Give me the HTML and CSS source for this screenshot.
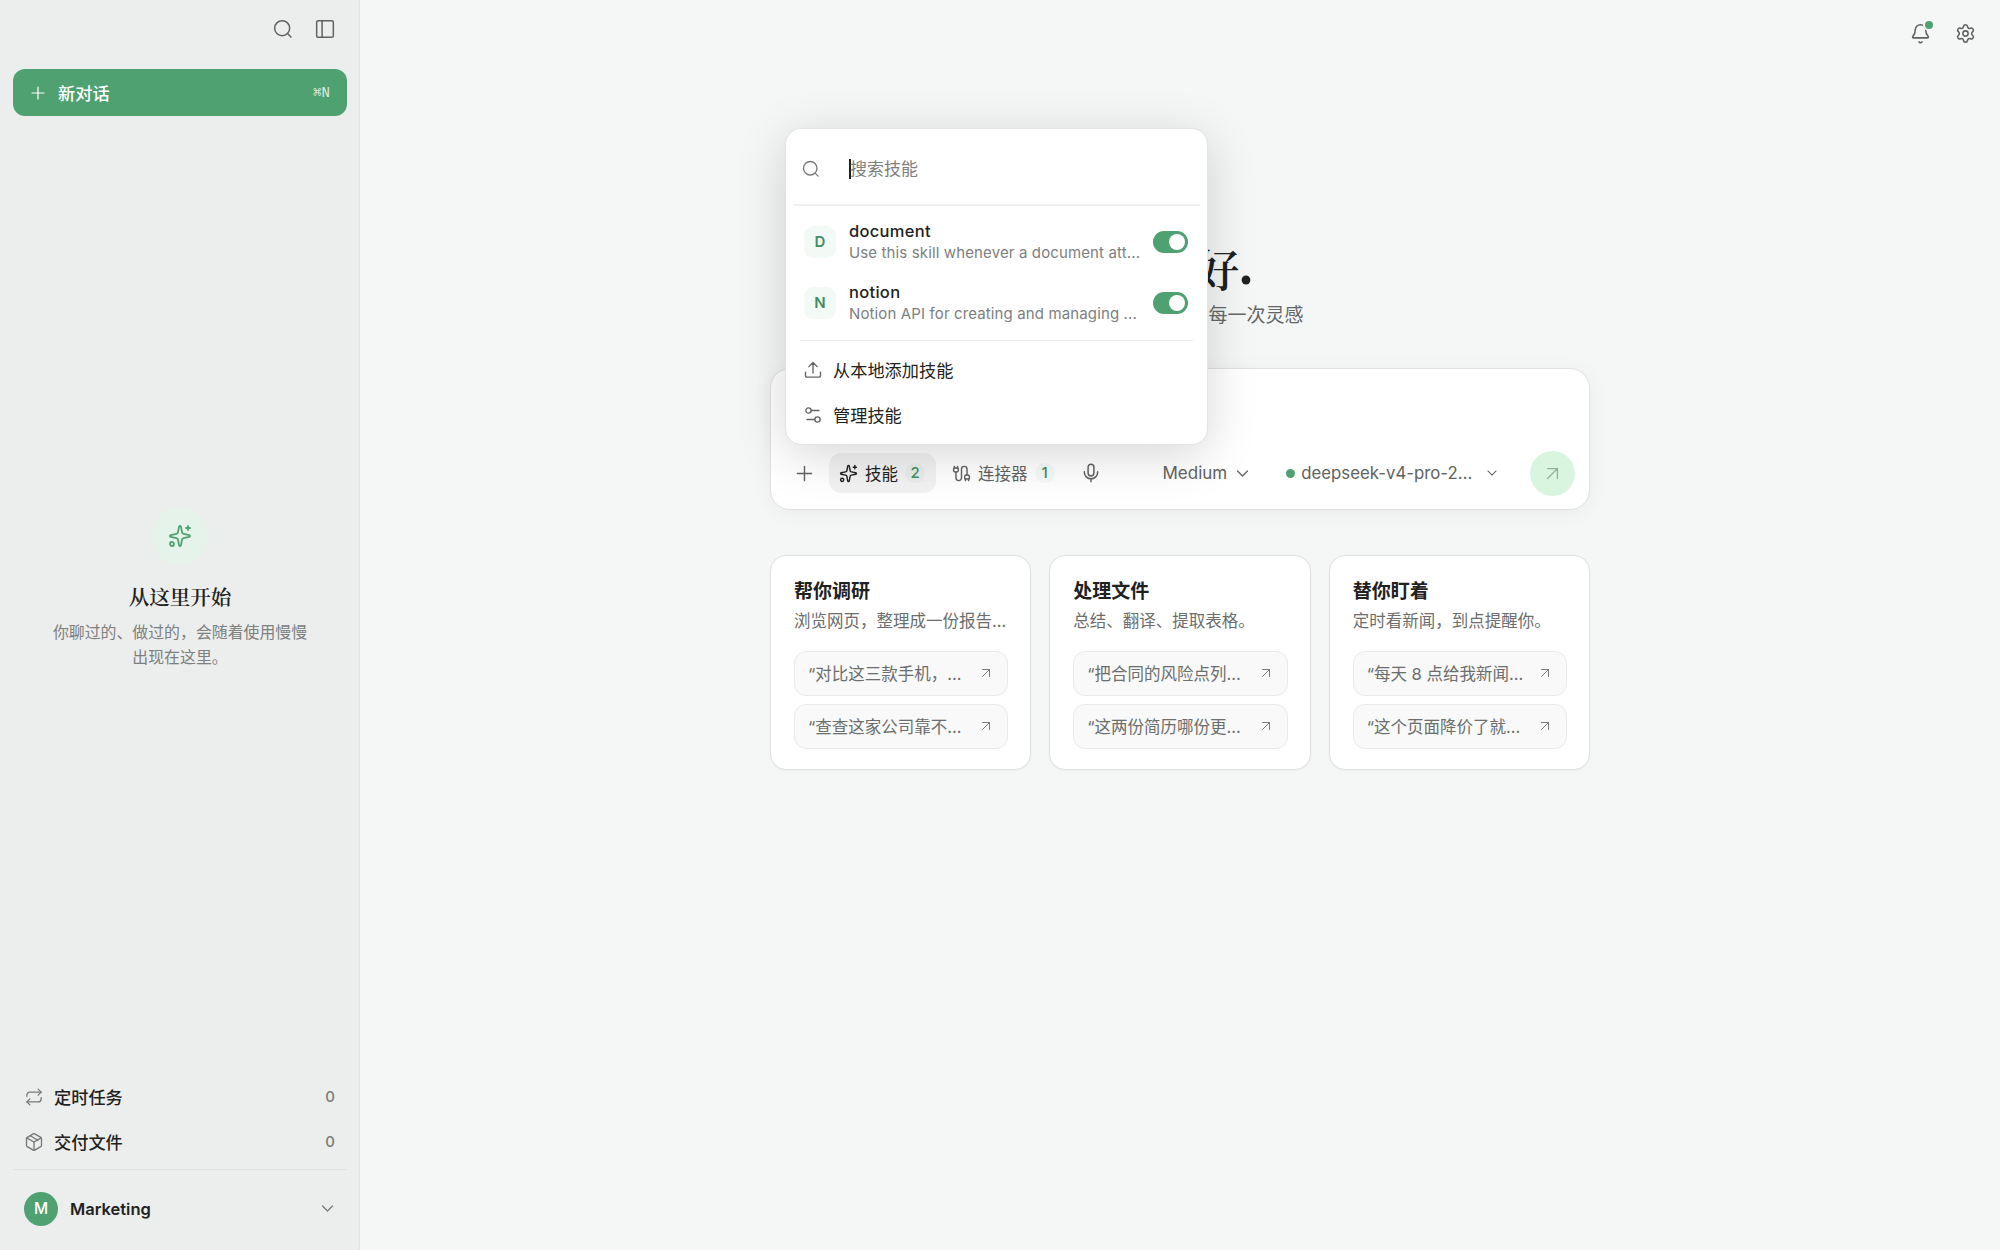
FILE: index.html
```html
<!DOCTYPE html>
<html lang="zh-CN">
<head>
    <meta charset="UTF-8">
    <meta name="viewport" content="width=device-width, initial-scale=1.0">
    <title>新对话</title>
    <link rel="stylesheet" href="styles.css">
</head>
<body>
    <!-- shared icons -->
    <svg class="sprite" width="0" height="0">
        <symbol id="search" viewBox="0 0 24 24"><circle cx="11" cy="11" r="9"/><path d="m21.5 21.5-4-4"/></symbol>
        <symbol id="sparkles" viewBox="0 0 24 24"><path d="M11.017 2.814a1 1 0 0 1 1.966 0l1.051 5.558a2 2 0 0 0 1.594 1.594l5.558 1.051a1 1 0 0 1 0 1.966l-5.558 1.051a2 2 0 0 0-1.594 1.594l-1.051 5.558a1 1 0 0 1-1.966 0l-1.051-5.558a2 2 0 0 0-1.594-1.594l-5.558-1.051a1 1 0 0 1 0-1.966l5.558-1.051a2 2 0 0 0 1.594-1.594z"/><path d="M20 2v4M22 4h-4"/><circle cx="4" cy="20" r="2"/></symbol>
        <symbol id="plus" viewBox="0 0 24 24"><path d="M3 12h18M12 3v18"/></symbol>
        <symbol id="chevron" viewBox="0 0 24 24"><path d="m5 8.5 7 7 7-7"/></symbol>
        <symbol id="arrow" viewBox="0 0 24 24"><path d="M5 5h14v14M19 5 5 19"/></symbol>
    </svg>

    <div class="app">
        <aside class="sidebar">
            <div class="side-tools">
                <svg class="icon i20"><use href="#search"/></svg>
                <svg class="icon i20" viewBox="0 0 24 24"><rect x="2" y="2" width="20" height="20" rx="2"/><path d="M8.5 2v20"/></svg>
            </div>
            <button class="new-chat">
                <svg class="icon i16"><use href="#plus"/></svg>
                <span>新对话</span>
                <kbd>⌘N</kbd>
            </button>

            <div class="empty">
                <div class="empty-icon"><svg class="icon i24"><use href="#sparkles"/></svg></div>
                <h2>从这里开始</h2>
                <p>你聊过的、做过的，会随着使用慢慢出现在这里。</p>
            </div>

            <nav class="side-nav">
                <a class="nav-item">
                    <svg class="icon i18" viewBox="0 0 24 24"><path d="m17.5 1.5 4 4-4 4"/><path d="M2.5 11V9.5a4 4 0 0 1 4-4h15"/><path d="m6.5 22.5-4-4 4-4"/><path d="M21.5 13v1.5a4 4 0 0 1-4 4h-15"/></svg>
                    <span>定时任务</span>
                    <b>0</b>
                </a>
                <a class="nav-item">
                    <svg class="icon i18" viewBox="0 0 24 24"><path d="M11 22.73a2 2 0 0 0 2 0l8-4.5A2 2 0 0 0 22 16.5v-9a2 2 0 0 0-1-1.73l-8-4.5a2 2 0 0 0-2 0l-8 4.5A2 2 0 0 0 2 7.5v9a2 2 0 0 0 1 1.73z"/><path d="M12 23V12.5"/><path d="M2.3 6.5 12 12l9.7-5.5"/><path d="m7 3.7 10 5.7"/></svg>
                    <span>交付文件</span>
                    <b>0</b>
                </a>
            </nav>
            <div class="account">
                <div class="avatar">M</div>
                <span>Marketing</span>
                <svg class="icon i17"><use href="#chevron"/></svg>
            </div>
        </aside>

        <main class="main">
            <header class="topbar">
                <div class="bell">
                    <svg class="icon i21" viewBox="0 0 24 24"><path d="M10.268 21.5a2 2 0 0 0 3.464 0"/><path d="M3.262 15.326A1 1 0 0 0 4 17h16a1 1 0 0 0 .74-1.673C19.41 13.956 18 12.499 18 8A6 6 0 0 0 6 8c0 4.499-1.411 5.956-2.738 7.326"/></svg>
                    <i class="bell-dot"></i>
                </div>
                <svg class="icon i21" viewBox="0 0 24 24"><path d="M9.671 4.136a2.34 2.34 0 0 1 4.659 0 2.34 2.34 0 0 0 3.319 1.915 2.34 2.34 0 0 1 2.33 4.033 2.34 2.34 0 0 0 0 3.831 2.34 2.34 0 0 1-2.33 4.033 2.34 2.34 0 0 0-3.319 1.915 2.34 2.34 0 0 1-4.659 0 2.34 2.34 0 0 0-3.32-1.915 2.34 2.34 0 0 1-2.33-4.033 2.34 2.34 0 0 0 0-3.831A2.34 2.34 0 0 1 6.35 6.051a2.34 2.34 0 0 0 3.319-1.915"/><circle cx="12" cy="12" r="3"/></svg>
            </header>

            <div class="content">
                <h1>下午好<span>.</span></h1>
                <p class="tagline">随时准备捕捉你的每一次灵感</p>

                <section class="composer">
                    <div class="tools">
                        <button class="tool tool-add"><svg class="icon i19"><use href="#plus"/></svg></button>
                        <button class="tool tool-skill active"><svg class="icon i19"><use href="#sparkles"/></svg>技能<em>2</em></button>
                        <button class="tool tool-link">
                            <svg class="icon i19" viewBox="0 0 24 24"><path d="M17 19a1 1 0 0 1-1-1v-2a2 2 0 0 1 2-2h2a2 2 0 0 1 2 2v2a1 1 0 0 1-1 1z"/><path d="M17 21v-2M21 21v-2M3 5V3M7 5V3"/><path d="M19 14V6.5a1 1 0 0 0-7 0v11a1 1 0 0 1-7 0V10"/><path d="M4 10a2 2 0 0 1-2-2V6a1 1 0 0 1 1-1h4a1 1 0 0 1 1 1v2a2 2 0 0 1-2 2z"/></svg>连接器<em>1</em>
                        </button>
                        <button class="tool tool-mic"><svg class="icon i20" viewBox="0 0 24 24"><path d="M12 19v3.5"/><path d="M20 10.5v.5a8 8 0 0 1-16 0v-.5"/><rect x="8.5" y="1.5" width="7" height="14" rx="3.5"/></svg></button>
                        <button class="tool tool-effort">Medium<svg class="icon i17"><use href="#chevron"/></svg></button>
                        <button class="tool tool-model"><i class="dot"></i><span>deepseek-v4-pro-2...</span><svg class="icon i14"><use href="#chevron"/></svg></button>
                        <button class="send"><svg class="icon i17"><use href="#arrow"/></svg></button>
                    </div>

                    <div class="popup">
                        <label class="popup-search">
                            <svg class="icon i18"><use href="#search"/></svg>
                            <span class="placeholder">搜索技能</span>
                        </label>
                        <div class="skills">
                            <div class="skill">
                                <div class="letter">D</div>
                                <div class="skill-text">
                                    <strong>document</strong>
                                    <small>Use this skill whenever a document att...</small>
                                </div>
                                <span class="toggle"></span>
                            </div>
                            <div class="skill">
                                <div class="letter">N</div>
                                <div class="skill-text">
                                    <strong>notion</strong>
                                    <small>Notion API for creating and managing ...</small>
                                </div>
                                <span class="toggle"></span>
                            </div>
                        </div>
                        <div class="actions">
                            <a class="action">
                                <svg class="icon i18" viewBox="0 0 24 24"><path d="M12 16V2M6.5 7.5 12 2l5.5 5.5"/><path d="M2 15v4.5a2 2 0 0 0 2 2h16a2 2 0 0 0 2-2V15"/></svg>
                                从本地添加技能
                            </a>
                            <a class="action">
                                <svg class="icon i18" viewBox="0 0 24 24"><path d="M14 18H4M20 6H10"/><circle cx="18" cy="18" r="3.5"/><circle cx="6" cy="6" r="3.5"/></svg>
                                管理技能
                            </a>
                        </div>
                    </div>
                </section>

                <section class="cards">
                    <article class="card">
                        <h3>帮你调研</h3>
                        <p>浏览网页，整理成一份报告...</p>
                        <a class="prompt"><span>“对比这三款手机，...</span><svg class="icon i12"><use href="#arrow"/></svg></a>
                        <a class="prompt"><span>“查查这家公司靠不...</span><svg class="icon i12"><use href="#arrow"/></svg></a>
                    </article>
                    <article class="card">
                        <h3>处理文件</h3>
                        <p>总结、翻译、提取表格。</p>
                        <a class="prompt"><span>“把合同的风险点列...</span><svg class="icon i12"><use href="#arrow"/></svg></a>
                        <a class="prompt"><span>“这两份简历哪份更...</span><svg class="icon i12"><use href="#arrow"/></svg></a>
                    </article>
                    <article class="card">
                        <h3>替你盯着</h3>
                        <p>定时看新闻，到点提醒你。</p>
                        <a class="prompt"><span>“每天 8 点给我新闻...</span><svg class="icon i12"><use href="#arrow"/></svg></a>
                        <a class="prompt"><span>“这个页面降价了就...</span><svg class="icon i12"><use href="#arrow"/></svg></a>
                    </article>
                </section>
            </div>
        </main>
    </div>
</body>
</html>
```
FILE: styles.css
```css
* {
    box-sizing: border-box;
}
body {
    margin: 0;
    font-family: Inter, "Noto Sans CJK SC", sans-serif;
    font-size: 17px;
    color: #1f2221;
    background: #f5f7f6;
}
h1, h2, h3, p {
    margin: 0;
}
button {
    border: none;
    background: none;
    padding: 0;
    font: inherit;
    color: inherit;
}
.sprite {
    display: none;
}
.icon {
    display: block;
    flex: none;
    fill: none;
    stroke: currentColor;
    stroke-width: 1.8;
    stroke-linecap: round;
    stroke-linejoin: round;
}
.i12 { width: 12px; height: 12px; }
.i14 { width: 14px; height: 14px; }
.i16 { width: 16px; height: 16px; }
.i17 { width: 17px; height: 17px; }
.i18 { width: 18px; height: 18px; }
.i19 { width: 19px; height: 19px; }
.i20 { width: 20px; height: 20px; }
.i21 { width: 21px; height: 21px; }
.i24 { width: 24px; height: 24px; }

.app {
    display: flex;
    height: 100vh;
}

/* sidebar */
.sidebar {
    width: 360px;
    display: flex;
    flex-direction: column;
    padding: 0 12px 0 13px;
    background: #eceeed;
    border-right: 1px solid #e2e4e3;
}
.side-tools {
    height: 69px;
    display: flex;
    justify-content: flex-end;
    gap: 22px;
    padding: 19px 12px 0 0;
    color: #606362;
}
.new-chat {
    height: 47px;
    flex: none;
    display: flex;
    align-items: center;
    padding: 0 17px;
    border-radius: 12px;
    background: #4fa172;
    color: #fff;
    font-size: 17.2px;
    font-weight: 500;
}
.new-chat span {
    margin-left: 12px;
}
.new-chat kbd {
    margin-left: auto;
    font: 14px "Liberation Mono", monospace;
    opacity: 0.8;
}
.empty {
    flex: 1;
    display: flex;
    flex-direction: column;
    align-items: center;
    padding-top: 391px;
    text-align: center;
}
.empty-icon {
    width: 58px;
    height: 58px;
    display: flex;
    align-items: center;
    justify-content: center;
    border-radius: 50%;
    background: #e6f3eb;
    color: #4fa172;
}
.empty h2 {
    margin-top: 16px;
    font: 600 20.5px/30px "Noto Serif CJK SC", "Liberation Serif", "Noto Sans CJK SC", serif;
}
.empty p {
    width: 270px;
    margin-top: 9px;
    font-size: 15.9px;
    line-height: 25px;
    color: #7d807f;
}
.nav-item {
    display: flex;
    align-items: center;
    height: 45px;
    padding: 0 12px;
    font-size: 17.2px;
    font-weight: 500;
}
.nav-item .icon {
    color: #777a79;
}
.nav-item span {
    margin-left: 11px;
}
.nav-item b {
    margin-left: auto;
    font-size: 15px;
    font-weight: 500;
    color: #7a7d7c;
}
.account {
    height: 81px;
    display: flex;
    align-items: center;
    margin-top: 5px;
    padding: 0 11px 3px;
    border-top: 1px solid #e0e2e1;
    font-weight: 600;
    font-size: 16.5px;
}
.account .icon {
    margin-left: auto;
    color: #777a79;
}
.avatar {
    width: 34px;
    height: 34px;
    margin-right: 12px;
    border-radius: 50%;
    background: #4fa172;
    color: #fff;
    font-size: 15.5px;
    font-weight: 500;
    line-height: 34px;
    text-align: center;
}

/* main */
.main {
    flex: 1;
}
.topbar {
    height: 66px;
    display: flex;
    align-items: center;
    justify-content: flex-end;
    gap: 24px;
    padding-right: 24px;
    color: #606362;
}
.bell {
    position: relative;
}
.bell-dot {
    position: absolute;
    top: -4px;
    right: -4px;
    width: 12px;
    height: 12px;
    border: 2px solid #f5f7f6;
    border-radius: 50%;
    background: #4fa172;
}
.content {
    width: 820px;
    margin: 0 auto;
    padding-top: 172px;
}
h1 {
    height: 63px;
    font: 600 44px/60px "Noto Serif CJK SC", "Liberation Serif", "Noto Sans CJK SC", serif;
    text-align: center;
}
h1 span {
    font: 700 54px/1px "Liberation Serif", serif;
    vertical-align: 3px;
}
.tagline {
    height: 30px;
    font-size: 19px;
    line-height: 30px;
    text-align: center;
    color: #646766;
}

/* composer */
.composer {
    position: relative;
    display: flex;
    align-items: flex-end;
    height: 142px;
    margin-top: 37px;
    padding: 0 14px 14px 13px;
    border: 1px solid #dfe2e1;
    border-radius: 20px;
    background: #fff;
    box-shadow: 0 3px 20px rgba(0, 0, 0, 0.05);
}
.tools {
    display: flex;
    flex: 1;
    align-items: center;
    height: 44px;
    color: #606362;
}
.tool {
    display: flex;
    align-items: center;
    height: 40px;
}
.tool em {
    font-style: normal;
    font-size: 15px;
    font-weight: 500;
    color: #3f8f63;
    width: 20px;
    line-height: 20px;
    border-radius: 10px;
    background: rgba(79, 161, 114, 0.06);
    text-align: center;
}
.tool-add {
    margin: 0 15px 0 11px;
}
.tool-skill {
    gap: 7px;
    width: 107px;
    padding-left: 10px;
    border-radius: 12px;
    color: #1f2221;
    font-size: 16.5px;
}
.active {
    background: rgba(0, 0, 0, 0.05);
}
.tool-link {
    gap: 7px;
    margin-left: 16px;
    font-size: 16.5px;
}
.tool-mic {
    margin-left: 26px;
}
.tool-effort {
    gap: 7px;
    margin-left: 62px;
}
.tool-model {
    margin-left: 35px;
}
.dot {
    width: 9px;
    height: 9px;
    margin-right: 6px;
    border-radius: 50%;
    background: #4fa172;
}
.tool-model span {
    width: 171px;
    margin-right: 13px;
    font-size: 16.8px;
    text-align: left;
    white-space: nowrap;
}
.send {
    width: 45px;
    height: 45px;
    display: flex;
    align-items: center;
    justify-content: center;
    margin-left: auto;
    border-radius: 50%;
    background: #daf5df;
    color: #8fb39b;
}

/* skills popup */
.popup {
    position: absolute;
    left: 14px;
    bottom: 64px;
    width: 423px;
    height: 317px;
    padding: 0 7px;
    border: 1px solid #e2e4e3;
    border-radius: 16px;
    background: #fff;
    box-shadow: 0 10px 50px rgba(0, 0, 0, 0.16);
}
.popup-search {
    display: flex;
    align-items: center;
    height: 77px;
    padding: 5px 0 0 9px;
    border-bottom: 2px solid #eff1f0;
}
.popup-search .icon {
    color: #777a79;
}
.placeholder {
    margin-left: 29px;
    border-left: 2px solid #1f2221;
    line-height: 20px;
    color: #7d807f;
    text-indent: -1px;
}
.skills {
    margin: 0 7px;
    padding: 5px 0 7px;
    border-bottom: 1px solid #eaeceb;
}
.skill {
    display: flex;
    align-items: center;
    height: 61px;
    padding: 0 5px 0 4px;
}
.letter {
    width: 32px;
    height: 32px;
    margin-right: 13px;
    border-radius: 9px;
    background: #f3f9f5;
    color: #3f8f63;
    font-size: 15px;
    font-weight: 600;
    line-height: 32px;
    text-align: center;
}
.skill-text {
    flex: 1;
    white-space: nowrap;
}
.skill-text strong {
    display: block;
    font-size: 16.5px;
    font-weight: 500;
    letter-spacing: 0.3px;
    line-height: 22px;
}
.skill-text small {
    display: block;
    font-size: 15px;
    letter-spacing: 0.13px;
    line-height: 21px;
    color: #7d807f;
}
.toggle {
    width: 35px;
    height: 22px;
    padding: 3px;
    border-radius: 11px;
    background: #4fa172;
}
.toggle::after {
    content: "";
    display: block;
    width: 16px;
    height: 16px;
    margin-left: auto;
    border-radius: 50%;
    background: #fff;
}
.actions {
    padding: 6px 0 0 11px;
}
.action {
    display: flex;
    align-items: center;
    gap: 11px;
    height: 45px;
    font-size: 17.2px;
}
.action .icon {
    color: #606362;
}

/* cards */
.cards {
    display: grid;
    grid-template-columns: repeat(3, 1fr);
    gap: 18px;
    margin-top: 45px;
}
.card {
    height: 215px;
    padding: 21px 22px 21px 23px;
    border: 1px solid #dfe2e1;
    border-radius: 16px;
    background: #fff;
    box-shadow: 0 1px 3px rgba(0, 0, 0, 0.04);
}
.card h3 {
    font-size: 19px;
    font-weight: 600;
    line-height: 30px;
}
.card p {
    font-size: 16.5px;
    line-height: 28px;
    white-space: nowrap;
    color: #6b6e6d;
}
.prompt {
    display: flex;
    align-items: center;
    justify-content: space-between;
    height: 45px;
    margin-top: 8px;
    padding: 0 15px 2px 13px;
    border: 1px solid #e9ebea;
    border-radius: 12px;
    background: #f8f9f8;
    font-size: 16.5px;
    white-space: nowrap;
    color: #6b6e6d;
}
.card p + .prompt {
    margin-top: 16px;
}
```
